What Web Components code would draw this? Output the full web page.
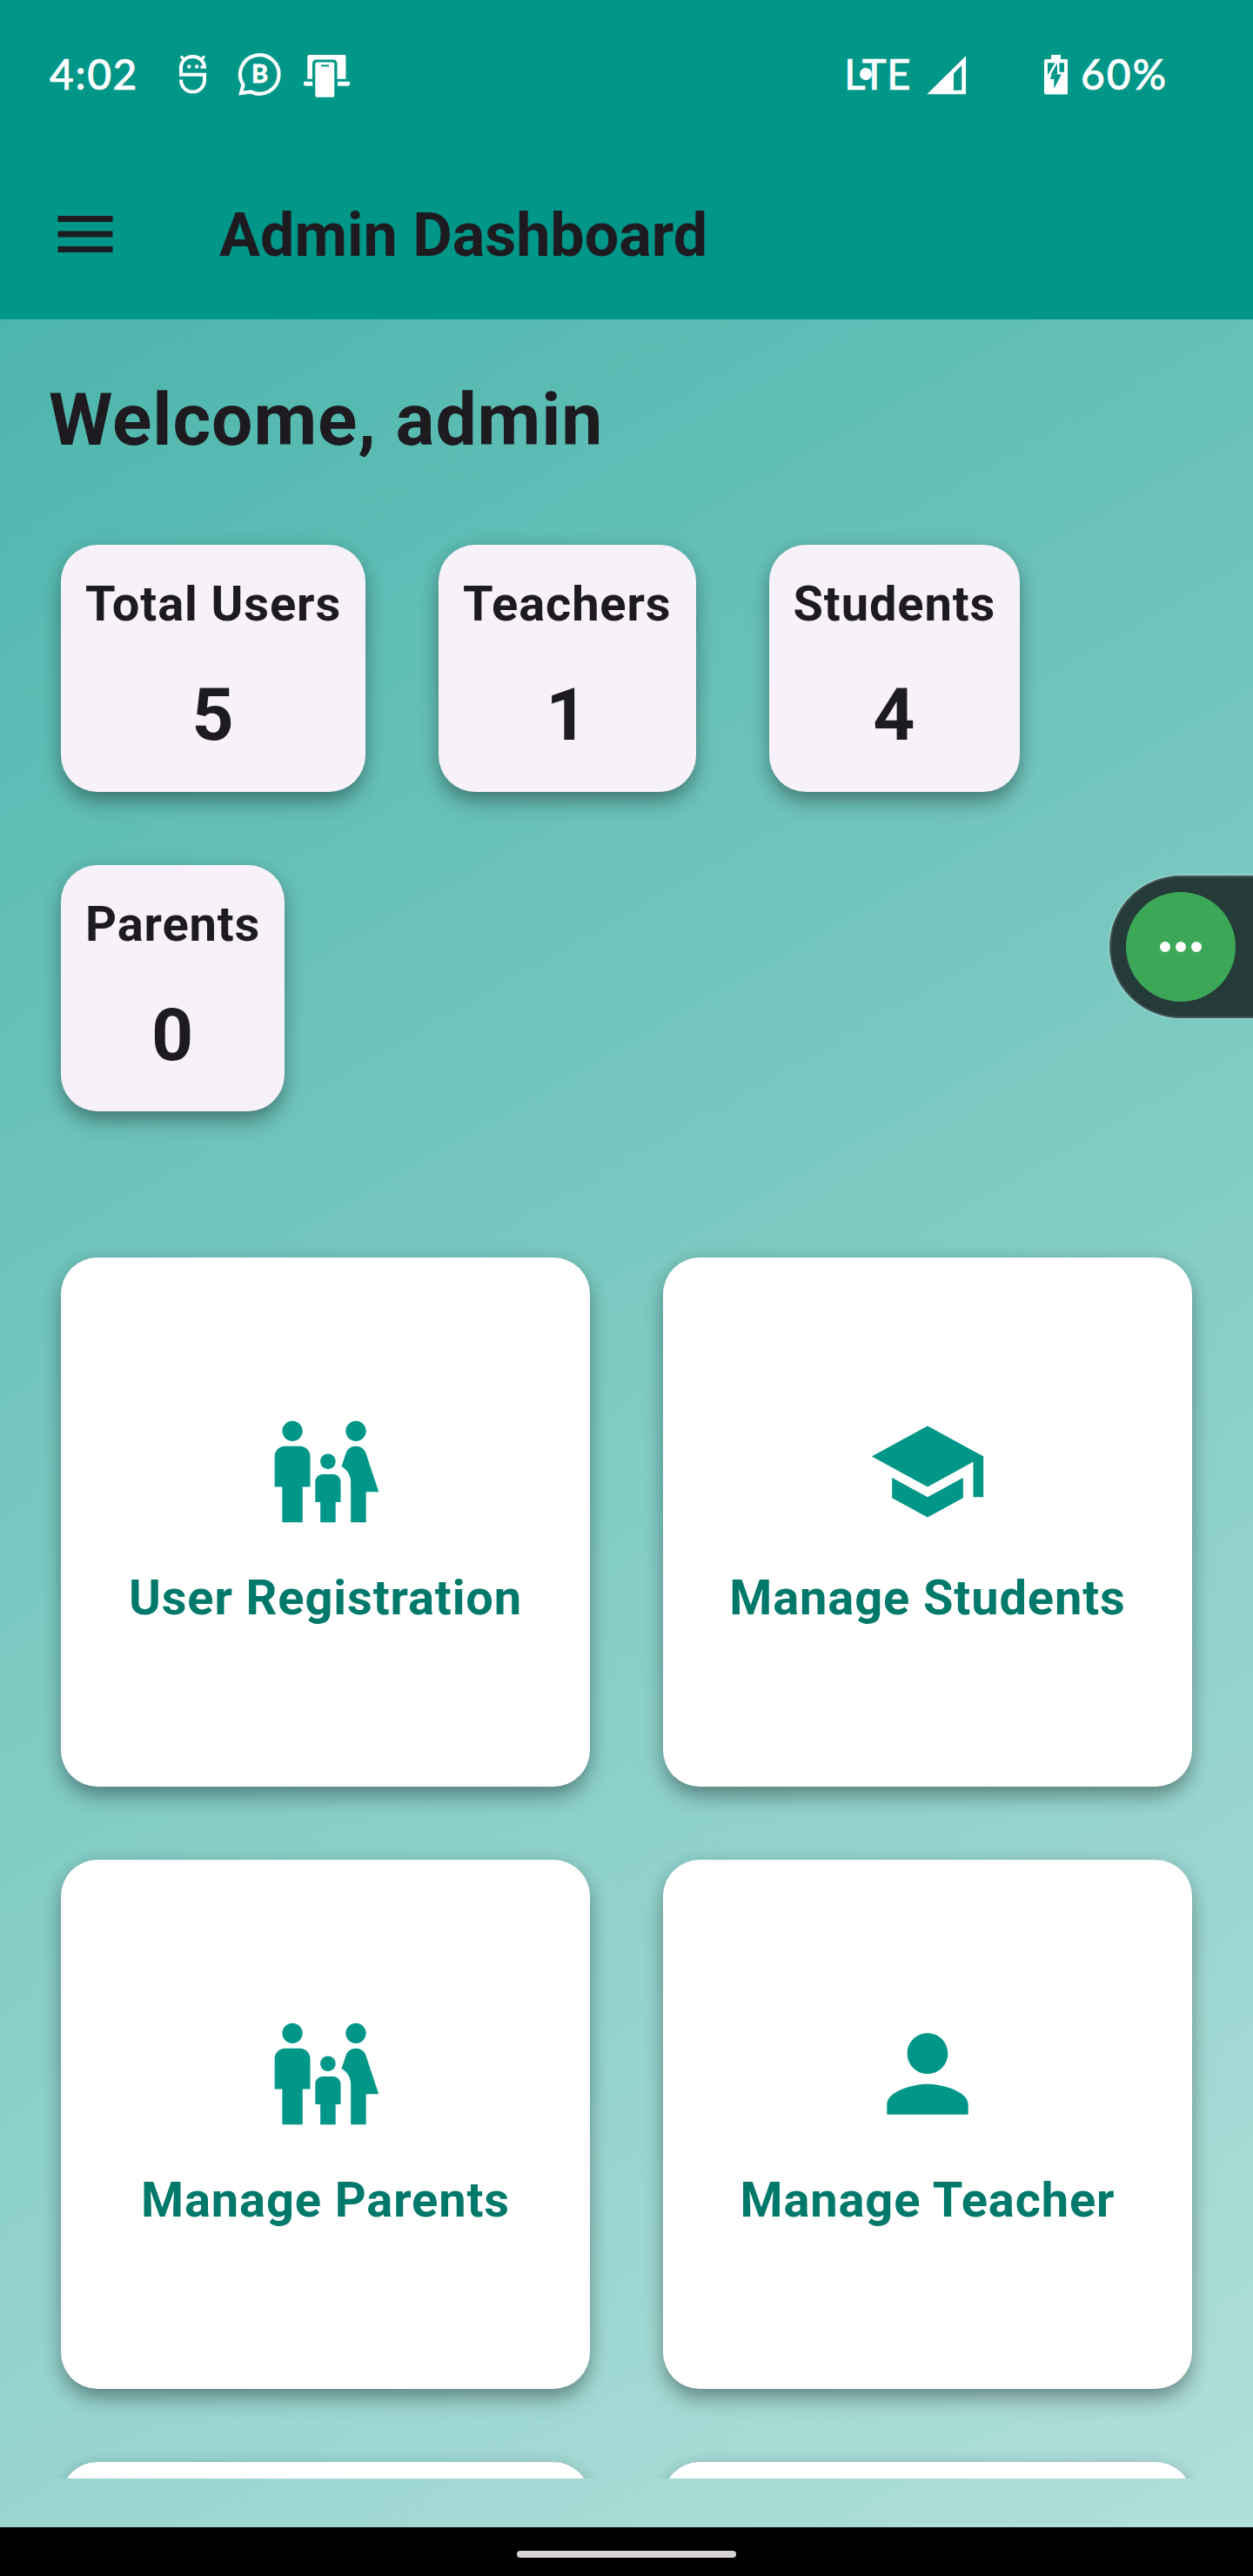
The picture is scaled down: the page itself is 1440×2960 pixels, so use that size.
<!DOCTYPE html>
<html lang="en">
<head>
<meta charset="utf-8">
<title>Admin Dashboard</title>
<style>
  html, body { margin: 0; padding: 0; background: #000; }
  body { width: 1440px; height: 2960px; overflow: hidden; font-family: Roboto, "Noto Sans", sans-serif; color: #1d1b20; }
</style>
</head>
<body>
<admin-screen></admin-screen>
<script>
const define = (name, html) => {
  const tpl = document.createElement('template');
  tpl.innerHTML = html;
  customElements.define(name, class extends HTMLElement {
    constructor() {
      super();
      this.attachShadow({ mode: 'open' }).appendChild(tpl.content.cloneNode(true));
    }
  });
};

const ICONS = {
  family: 'M16,4c0-1.11,0.89-2,2-2s2,0.89,2,2s-0.89,2-2,2S16,5.11,16,4z M20,22v-6h2.5l-2.54-7.63C19.68,7.55,18.92,7,18.06,7h-0.12c-0.86,0-1.63,0.55-1.9,1.37l-0.86,2.58C16.26,11.55,17,12.68,17,14v8H20z M12.5,11.5c0.83,0,1.5-0.67,1.5-1.5s-0.67-1.5-1.5-1.5S11,9.17,11,10S11.67,11.5,12.5,11.5z M5.5,6c1.11,0,2-0.89,2-2s-0.89-2-2-2s-2,0.89-2,2S4.39,6,5.5,6z M7.5,22v-7H9V9c0-1.1-0.9-2-2-2H4C2.9,7,2,7.9,2,9v6h1.5v7H7.5z M14,22v-4h1v-4c0-0.82-0.68-1.5-1.5-1.5h-2c-0.82,0-1.5,0.68-1.5,1.5v4h1v4H14z',
  school: 'M5 13.18v4L12 21l7-3.82v-4L12 17l-7-3.82zM12 3L1 9l11 6 9-4.91V17h2V9L12 3z',
  person: 'M12 12c2.21 0 4-1.79 4-4s-1.79-4-4-4-4 1.79-4 4 1.79 4 4 4zm0 2c-2.67 0-8 1.34-8 4v2h16v-2c0-2.66-5.33-4-8-4z',
  menu: 'M3 18h18v-2H3v2zm0-5h18v-2H3v2zm0-7v2h18V6H3z'
};

customElements.define('md-icon', class extends HTMLElement {
  constructor() {
    super();
    this.attachShadow({ mode: 'open' });
  }
  connectedCallback() {
    this.shadowRoot.innerHTML = `
      <style>:host { display: block; flex: none; width: var(--size, 84px); height: var(--size, 84px); } svg { display: block; width: 100%; height: 100%; }</style>
      <svg viewBox="0 0 24 24" fill="currentColor"><path d="${ICONS[this.getAttribute('name')]}"/></svg>`;
  }
});

define('status-bar', `
  <style>
    :host { display: flex; align-items: center; height: 171px; box-sizing: border-box; padding: 0 99px 0 57px; color: #fff; font-family: Lato, sans-serif; font-size: 48px; font-weight: 500; line-height: 58px; white-space: pre; }
    svg { display: block; flex: none; }
    span { padding-bottom: 2px; }
    .time { width: 145px; letter-spacing: 1.6px; -webkit-text-stroke: .6px #fff; }
    .spring { flex: 1; }
    .net { position: relative; width: 95px; letter-spacing: .2px; -webkit-text-stroke: .3px #fff; }
    .net i { position: absolute; left: 17.5px; top: 22px; width: 14px; height: 14px; border-radius: 50%; background: #fff; }
    .pct { width: 99px; letter-spacing: 1.9px; -webkit-text-stroke: .6px #fff; }
  </style>
  <span class="time">4:02</span>
  <svg width="208" height="60" viewBox="202 56 208 60" fill="none" stroke="#fff" stroke-width="4">
    <path d="M235 78.3V77.500a13.500 12.500 0 0 0-27 0V85.700H235V92a13.500 13.500 0 0 1-27 0V91.500"/>
    <path d="M208 64.500l4 4.500M235 64.500l-4 4.500M230.500 77.200h6.500" stroke-width="3.200"/>
    <g fill="#fff" stroke="none"><circle cx="217.300" cy="76.500" r="2.200"/><circle cx="226.200" cy="76.500" r="2.200"/></g>
    <path d="M279.500 97.500a22.300 22.300 0 1 1 9 8L277 107z" stroke-width="4.200"/>
    <text x="289" y="95.200" font-family="Lato, sans-serif" font-weight="700" font-size="29" fill="#fff" stroke-width=".8" stroke="#fff">B</text>
    <g fill="#fff" stroke="none">
      <path d="M355.300 63h40.200a2 2 0 0 1 2 2v25.700h-10V73a4.500 4.500 0 0 0-4.500-4.500h-19.500a4.500 4.500 0 0 0-4.500 4.500v17.700h-5.700V65a2 2 0 0 1 2-2z"/>
      <path d="M349 93.700h10.200v5H351.500a2.500 2.500 0 0 1-2.500-2.500zM388 93.700h14v2.500a2.500 2.500 0 0 1-2.500 2.500H388z"/>
      <path fill-rule="evenodd" d="M364.300 71.500h18a2 2 0 0 1 2 2v36.200a2 2 0 0 1-2 2h-18a2 2 0 0 1-2-2V73.500a2 2 0 0 1 2-2zM369 74.500v2h9v-2z"/>
    </g>
  </svg>
  <span class="spring"></span>
  <span class="net">LTE<i></i></span>
  <svg width="46" height="46" viewBox="1065 62.500 46 46" fill="#fff"><path fill-rule="evenodd" d="M1065.300 107.700L1110 63.700v44zM1096 84v19.300h9.300V74.500z"/></svg>
  <svg width="27" height="46" viewBox="1200 62 27 46" style="margin: 0 15px 0 89px">
    <path fill="#fff" d="M1208 62h11v5h6a2.300 2.300 0 0 1 2.300 2.300v36a2.300 2.300 0 0 1-2.300 2.300h-22.700a2.300 2.300 0 0 1-2.300-2.300v-36a2.300 2.300 0 0 1 2.300-2.300h5.700z"/>
    <path fill="#009688" d="M1204 71.300h8.500l-8.500 14zM1215 71.300V84.300h-7.500zM1217.500 71.300h5.500v10.500h-5.500zM1212.300 84.500h7.500l-8.500 16.500V90h-4.300l1.500-5.700z"/>
    <path fill="#fff" d="M1213.300 71.300h1.800l-7.300 13h-2z"/>
  </svg>
  <span class="pct">60%</span>
`);

define('app-bar', `
  <style>
    :host { display: flex; align-items: center; gap: 112px; height: 196px; padding-left: 56px; }
    ::slotted(h1) { margin: 0; padding-top: 2px; font-size: 70px; font-weight: 700; line-height: 89px; white-space: nowrap; }
  </style>
  <md-icon name="menu"></md-icon><slot></slot>
`);

define('stat-card', `
  <style>
    :host { display: flex; flex-direction: column; align-items: center; gap: 26.500px; box-sizing: border-box; height: 283.5px; padding: 28px; border-radius: 42px; background: #f7f2fa;
      box-shadow: var(--card-shadow); font-weight: 700; letter-spacing: .875px; white-space: nowrap; }
    .label { font-size: 56px; line-height: 81.5px; }
    .value { font-size: 84px; line-height: 119px; }
  </style>
  <div class="label"><slot></slot></div>
  <div class="value"><slot name="value"></slot></div>
`);

define('action-card', `
  <style>
    :host { --size: 140px; display: flex; flex-direction: column; align-items: center; justify-content: center; gap: 35px; height: 608px; border-radius: 42px; background: #fff;
      box-shadow: var(--card-shadow); color: #009688; }
    .label { color: #00796b; font-size: 56px; line-height: 80.5px; font-weight: 700; letter-spacing: .875px; white-space: nowrap; }
  </style>
  <slot name="icon"></slot>
  <div class="label"><slot></slot></div>
`);

define('edge-bubble', `
  <style>
    :host { position: absolute; right: -4px; top: 1006px; display: flex; align-items: center; box-sizing: border-box; width: 169px; height: 164px; padding-left: 17px;
      border: 2px solid #445452; border-radius: 82px 0 0 82px; background: #253b39; box-shadow: 0 0 0 1.500px rgba(160,220,214,.7); }
    .dot { display: flex; align-items: center; justify-content: center; gap: 6px; width: 126px; height: 126px; border-radius: 50%; background: #3ca857; }
    i { width: 12.300px; height: 12.300px; border-radius: 50%; background: #fff; }
  </style>
  <div class="dot"><i></i><i></i><i></i></div>
`);

define('nav-handle', `
  <style>
    :host { display: flex; justify-content: center; align-items: flex-start; height: 56px; box-sizing: border-box; padding-top: 27px; background: #000; }
    i { width: 252px; height: 8px; border-radius: 4px; background: #d6d2d6; }
  </style><i></i>
`);

define('admin-screen', `
  <style>
    :host { position: relative; display: flex; flex-direction: column; width: 1440px; height: 2960px; overflow: hidden;
      --card-shadow: 0 14px 24px -3px rgba(0,0,0,.32), 0 2px 20px rgba(0,0,0,.12); }
    header { background: #009688; height: 367px; }
    main { height: 2537px; box-sizing: border-box; padding-bottom: 56px; background: linear-gradient(150.420deg, #4db6ac, #80cbc4, #b2dfdb); }
    .view { height: 2481px; box-sizing: border-box; padding: 56px 70px 0; overflow: hidden; }
    h2 { margin: 0 0 84px -14px; font-size: 84px; line-height: 119px; font-weight: 700; letter-spacing: .875px; }
    .stats { display: flex; flex-wrap: wrap; gap: 84px; }
    .actions { display: grid; grid-template-columns: 608px 608px; gap: 84px; margin-top: 168px; }
  </style>
  <header>
    <status-bar></status-bar>
    <app-bar><h1>Admin Dashboard</h1></app-bar>
  </header>
  <main>
    <div class="view">
      <h2>Welcome, admin</h2>
      <div class="stats">
        <stat-card>Total Users<span slot="value">5</span></stat-card>
        <stat-card>Teachers<span slot="value">1</span></stat-card>
        <stat-card>Students<span slot="value">4</span></stat-card>
        <stat-card>Parents<span slot="value">0</span></stat-card>
      </div>
      <div class="actions">
        <action-card><md-icon slot="icon" name="family"></md-icon>User Registration</action-card>
        <action-card><md-icon slot="icon" name="school"></md-icon>Manage Students</action-card>
        <action-card><md-icon slot="icon" name="family"></md-icon>Manage Parents</action-card>
        <action-card><md-icon slot="icon" name="person"></md-icon>Manage Teacher</action-card>
        <action-card></action-card>
        <action-card></action-card>
      </div>
    </div>
  </main>
  <edge-bubble></edge-bubble>
  <nav-handle></nav-handle>
`);
</script>
</body>
</html>
